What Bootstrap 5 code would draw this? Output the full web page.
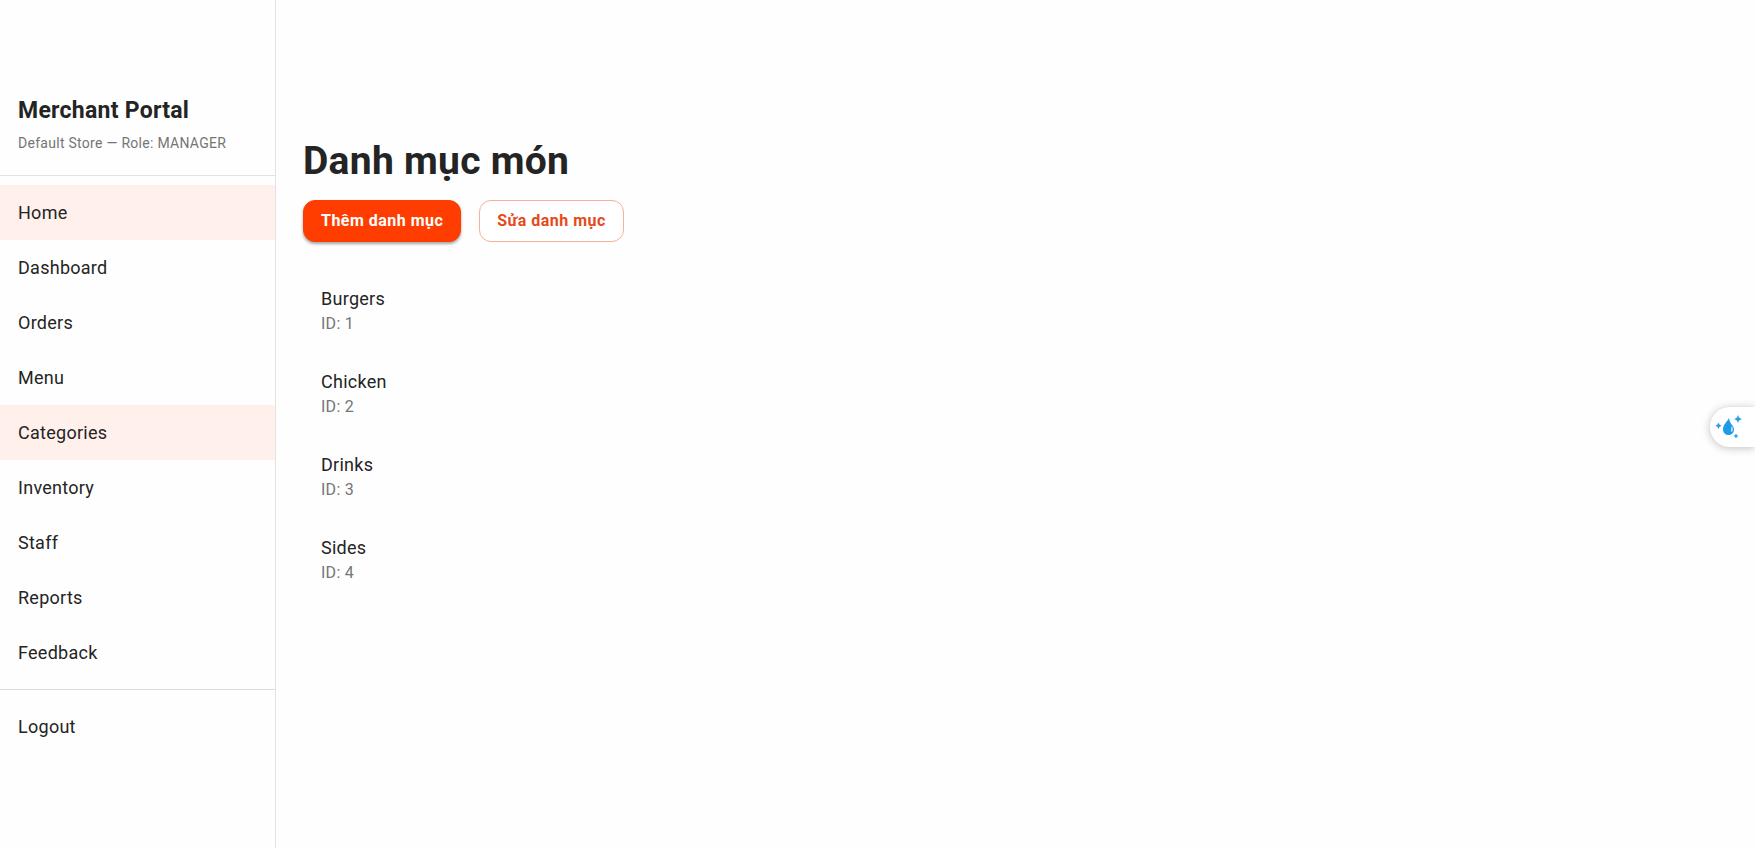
<!DOCTYPE html>
<html lang="vi">
<head>
<meta charset="utf-8">
<meta name="viewport" content="width=device-width, initial-scale=1">
<title>Merchant Portal</title>
<link href="https://cdn.jsdelivr.net/npm/bootstrap@5.3.0/dist/css/bootstrap.min.css" rel="stylesheet">
<style>
  body { font-family: Roboto, "Liberation Sans", sans-serif; font-size: 18px; line-height: 27px; letter-spacing: .015em; color: #242424; background: #fefefe; }
  .side-panel { width: 276px; border-right: 1px solid #e2e2e2; padding-top: 74px; }
  .side-head { padding: 18px 18px 19px; border-bottom: 1px solid #e2e2e2; }
  .portal-title { font-size: 23px; line-height: 38px; font-weight: 700; }
  .portal-role { font-size: 14px; line-height: 26px; letter-spacing: .02em; color: #757575; }
  .side-nav { padding: 9px 0; }
  .side-nav .nav-link { color: #242424; padding: 14px 18px; line-height: 27px; }
  .side-nav .nav-link:hover, .side-nav .nav-link.active { background: #fff0ec; }
  .side-nav + .side-nav { border-top: 1px solid #dcdcdc; }
  .page-main { padding: 138px 27px 27px; }
  .page-title { font-size: 39px; line-height: 46px; font-weight: 700; }
  .btn-row { gap: 18px; }
  .btn-cat { font-size: 16px; line-height: 28px; letter-spacing: .03em; font-weight: 700; padding: 6px 17px; border-radius: 12px; }
  .btn-add, .btn-add:hover { background: #ff3d00; border-color: #ff3d00; color: #fff; box-shadow: 0 2px 3px rgba(0,0,0,.35); }
  .btn-edit, .btn-edit:hover { background: #fff; border-color: #f7b09a; color: #e64a19; }
  .cat-list { padding-top: 3px; }
  .cat-item { padding: 16px 18px; }
  .cat-id { font-size: 16px; line-height: 24px; color: #757575; }
  .assist-tab { right: 0; top: 407px; width: 45px; height: 40px; border-radius: 20px 0 0 20px; background: #fff; box-shadow: 0 1px 8px rgba(0,0,0,.25); }
</style>
</head>
<body>
<div class="d-flex min-vh-100">
  <aside class="side-panel flex-shrink-0">
    <div class="side-head">
      <div class="portal-title">Merchant Portal</div>
      <div class="portal-role">Default Store — Role: MANAGER</div>
    </div>
    <nav class="side-nav nav flex-column">
      <a class="nav-link active" href="#">Home</a>
      <a class="nav-link" href="#">Dashboard</a>
      <a class="nav-link" href="#">Orders</a>
      <a class="nav-link" href="#">Menu</a>
      <a class="nav-link active" href="#" aria-current="page">Categories</a>
      <a class="nav-link" href="#">Inventory</a>
      <a class="nav-link" href="#">Staff</a>
      <a class="nav-link" href="#">Reports</a>
      <a class="nav-link" href="#">Feedback</a>
    </nav>
    <nav class="side-nav nav flex-column">
      <a class="nav-link" href="#">Logout</a>
    </nav>
  </aside>
  <main class="page-main flex-grow-1">
    <h1 class="page-title mb-3">Danh mục món</h1>
    <div class="btn-row d-flex flex-wrap mb-4">
      <button type="button" class="btn btn-cat btn-add">Thêm danh mục</button>
      <button type="button" class="btn btn-cat btn-edit">Sửa danh mục</button>
    </div>
    <ul class="cat-list list-unstyled mb-0">
      <li class="cat-item"><div>Burgers</div><div class="cat-id">ID: 1</div></li>
      <li class="cat-item"><div>Chicken</div><div class="cat-id">ID: 2</div></li>
      <li class="cat-item"><div>Drinks</div><div class="cat-id">ID: 3</div></li>
      <li class="cat-item"><div>Sides</div><div class="cat-id">ID: 4</div></li>
    </ul>
  </main>
</div>
<button type="button" class="assist-tab position-fixed border-0 p-0 d-flex align-items-center" aria-label="Assistant">
  <svg class="ms-1" width="30" height="30" viewBox="0 0 30 30" fill="#1e9be6" aria-hidden="true">
    <path d="M15 6C13.500 9.500 9 12.500 9 17.500a5.500 5.500 0 0 0 11 0C20 13.500 15.500 12 15 6z"/>
    <path d="M17.800 15.500q.8 1.500-.2 3.500" fill="none" stroke="#d9f1ff" stroke-width="1.400" stroke-linecap="round"/>
    <path d="M24 3.500q.5 3 3.500 3.500q-3 .5-3.500 3.500q-.5-3-3.500-3.500q3-.5 3.500-3.500zM4.500 11q.4 2.200 2.700 2.700q-2.300.5-2.700 2.700q-.4-2.200-2.700-2.700q2.300-.5 2.700-2.700zM22 22q.3 1.700 2 2q-1.700.3-2 2q-.3-1.700-2-2q1.700-.3 2-2z" stroke="#1e9be6" stroke-width=".4"/>
  </svg>
</button>
<script src="https://cdn.jsdelivr.net/npm/bootstrap@5.3.0/dist/js/bootstrap.bundle.min.js"></script>
</body>
</html>
